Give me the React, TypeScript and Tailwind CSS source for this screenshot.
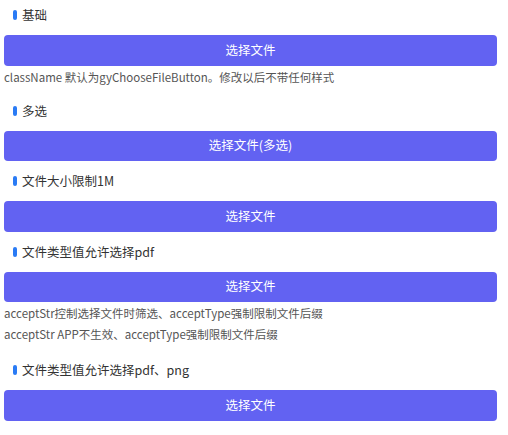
import React from 'react';

const font = { fontFamily: '"Noto Sans CJK SC", "Noto Sans", sans-serif' };

const Title: React.FC<{ text: string; first?: boolean }> = ({ text, first }) => (
  <div className={first ? 'pt-[5px]' : 'pt-[10px]'}>
    <div className="flex h-[20px] items-center">
      <span className="ml-[13px] h-[10px] w-[3.5px] rounded-full bg-[#2a7bf5]" />
      <span className="ml-[5.5px] text-[12.5px] leading-[20px] text-[#333]">{text}</span>
    </div>
  </div>
);

const FileButton: React.FC<{ label?: string }> = ({ label = '选择文件' }) => (
  <div className="pt-[10px]">
    <button className="ml-[4px] flex h-[30.5px] w-[493px] items-center justify-center rounded-[4px] bg-[#6262f2] text-[12.5px] text-white">
      {label}
    </button>
  </div>
);

const Note: React.FC<{ lines: string[]; loose?: boolean }> = ({ lines, loose }) => (
  <div className={`${loose ? 'pb-[5px]' : 'pb-[3px]'} pl-[4px] pt-[1px] text-[11.5px] leading-[21px] text-[#555]`}>
    {lines.map((l) => (
      <div key={l}>{l}</div>
    ))}
  </div>
);

export default function App() {
  return (
    <div className="h-[435px] w-[508px] overflow-hidden bg-white" style={font}>
      <Title text="基础" first />
      <FileButton />
      <Note lines={['className 默认为gyChooseFileButton。修改以后不带任何样式']} />

      <Title text="多选" />
      <FileButton label="选择文件(多选)" />

      <Title text="文件大小限制1M" />
      <FileButton />

      <Title text="文件类型值允许选择pdf" />
      <FileButton />
      <Note
        loose
        lines={[
          'acceptStr控制选择文件时筛选、acceptType强制限制文件后缀',
          'acceptStr APP不生效、acceptType强制限制文件后缀',
        ]}
      />

      <Title text="文件类型值允许选择pdf、png" />
      <FileButton />
    </div>
  );
}
